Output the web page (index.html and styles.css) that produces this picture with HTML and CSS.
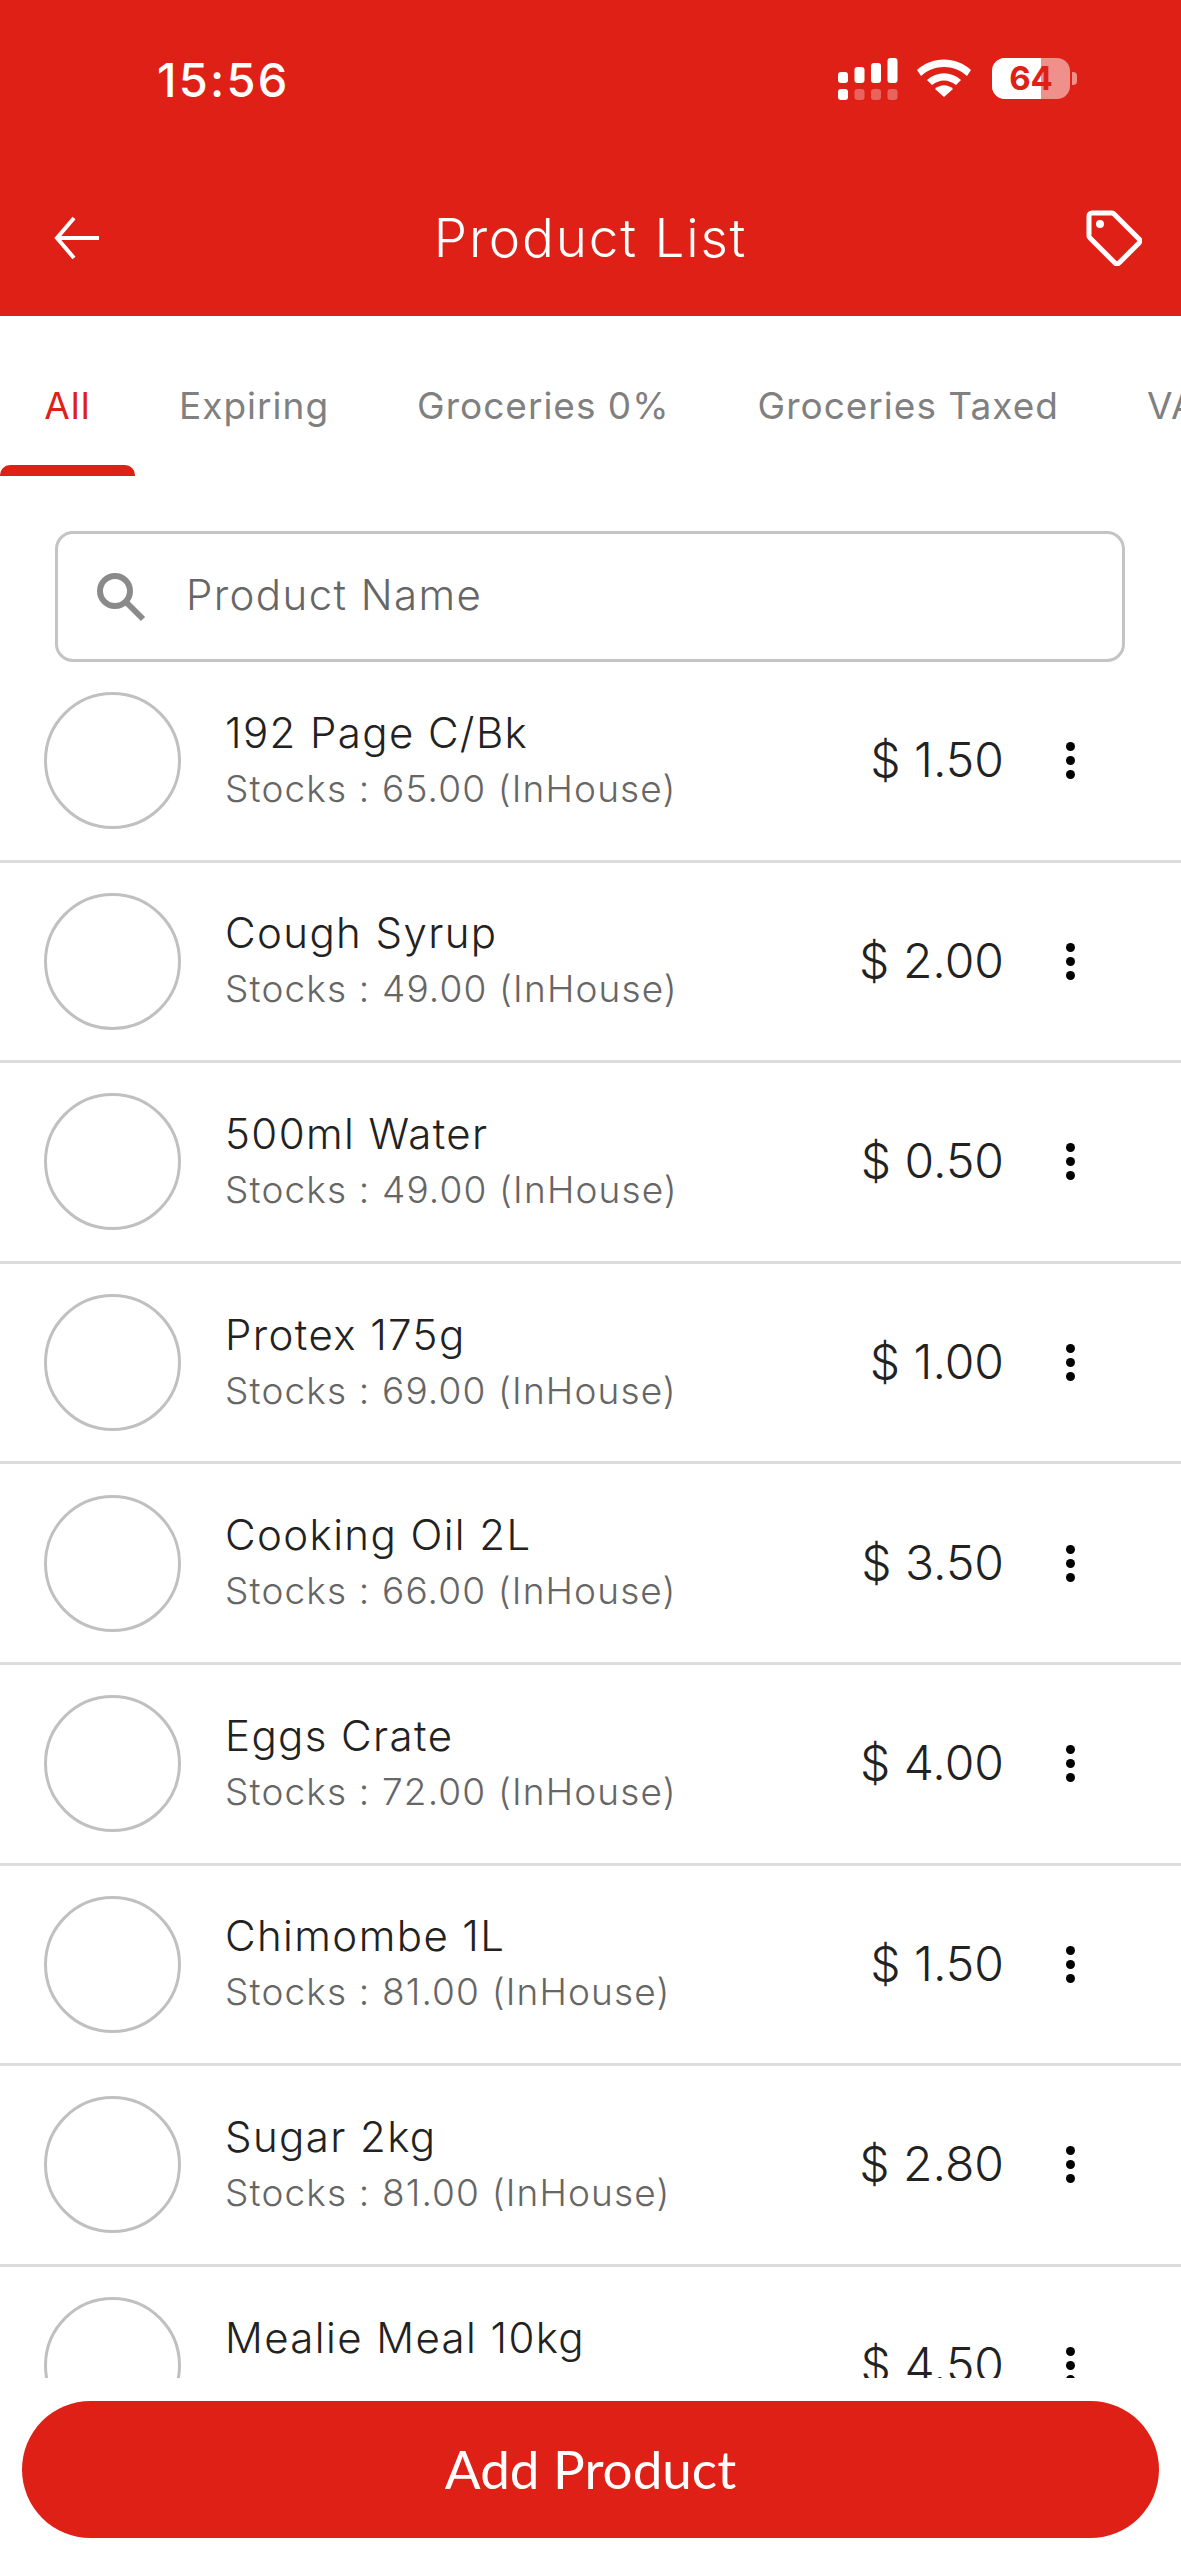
FILE: index.html
```html
<!DOCTYPE html>
<html lang="en">
<head>
    <meta charset="UTF-8">
    <meta name="viewport" content="width=device-width, initial-scale=1.0">
    <title>Product List</title>
    <link rel="stylesheet" href="styles.css">
</head>
<body>
    <div class="app">
        <div class="header">
            <div class="status-bar">
                <div class="time">15:56</div>
                <div class="status-icons">
                    <svg class="signal" width="60" height="42" viewBox="0 0 60 42" fill="#fff">
                        <rect x="0" y="14" width="10" height="11" rx="3"/>
                        <rect x="16.500" y="9" width="10" height="16" rx="3"/>
                        <rect x="33" y="5" width="10" height="20" rx="3"/>
                        <rect x="49.500" y="0" width="10" height="25" rx="3"/>
                        <rect x="0" y="31" width="10" height="11" rx="3"/>
                        <g opacity="0.3">
                            <rect x="16.500" y="31" width="10" height="11" rx="3"/>
                            <rect x="33" y="31" width="10" height="11" rx="3"/>
                            <rect x="49.500" y="31" width="10" height="11" rx="3"/>
                        </g>
                    </svg>
                    <svg class="wifi" width="54" height="38" viewBox="0 0 54 38" fill="#fff">
                        <path d="M0 11 C15 -3 39 -3 54 11 L50 17 C37 5 17 5 4 17 Z"/>
                        <path d="M10 21 C20 12 34 12 44 21 L39 26 C31 20 23 20 15 26 Z"/>
                        <path d="M18 30 C23 25 31 25 36 30 L27 38 Z"/>
                    </svg>
                    <div class="battery">
                        <div class="battery-body">
                            <div class="battery-fill"></div>
                            <span class="battery-text">64</span>
                        </div>
                        <div class="battery-cap"></div>
                    </div>
                </div>
            </div>
            <div class="toolbar">
                <svg class="back" width="46" height="44" viewBox="0 0 46 44" fill="none" stroke="#fff" stroke-width="4">
                    <path d="M45 22H4"/>
                    <path d="M20 2L3 22l17 20"/>
                </svg>
                <div class="title">Product List</div>
                <svg class="tag" width="56" height="56" viewBox="0 0 56 56" fill="none" stroke="#fff" stroke-width="5" stroke-linejoin="round">
                    <path d="M3 6a3 3 0 0 1 3-3h20a3 3 0 0 1 2 1l25 25a3 3 0 0 1 0 4L33 53a3 3 0 0 1-4 0L4 28a3 3 0 0 1-1-2z"/>
                    <circle cx="14" cy="14" r="4" fill="#fff" stroke="none"/>
                </svg>
            </div>
        </div>

        <div class="tabs">
            <div class="tab active">All</div>
            <div class="tab">Expiring</div>
            <div class="tab">Groceries 0%</div>
            <div class="tab">Groceries Taxed</div>
            <div class="tab">VAT</div>
        </div>

        <div class="search">
            <svg width="50" height="50" viewBox="0 0 50 50" fill="none" stroke="#8a8a8a" stroke-width="6">
                <circle cx="19" cy="19" r="15"/>
                <path d="M30 30l17 17"/>
            </svg>
            <span>Product Name</span>
        </div>

        <div class="list">
            <div class="row">
                <div class="thumb"></div>
                <div class="info"><div class="name">192 Page C/Bk</div><div class="stock">Stocks : 65.00 (InHouse)</div></div>
                <div class="price">$ 1.50</div>
                <div class="more"><i></i><i></i><i></i></div>
            </div>
            <div class="row">
                <div class="thumb"></div>
                <div class="info"><div class="name">Cough Syrup</div><div class="stock">Stocks : 49.00 (InHouse)</div></div>
                <div class="price">$ 2.00</div>
                <div class="more"><i></i><i></i><i></i></div>
            </div>
            <div class="row">
                <div class="thumb"></div>
                <div class="info"><div class="name">500ml Water</div><div class="stock">Stocks : 49.00 (InHouse)</div></div>
                <div class="price">$ 0.50</div>
                <div class="more"><i></i><i></i><i></i></div>
            </div>
            <div class="row">
                <div class="thumb"></div>
                <div class="info"><div class="name">Protex 175g</div><div class="stock">Stocks : 69.00 (InHouse)</div></div>
                <div class="price">$ 1.00</div>
                <div class="more"><i></i><i></i><i></i></div>
            </div>
            <div class="row">
                <div class="thumb"></div>
                <div class="info"><div class="name">Cooking Oil 2L</div><div class="stock">Stocks : 66.00 (InHouse)</div></div>
                <div class="price">$ 3.50</div>
                <div class="more"><i></i><i></i><i></i></div>
            </div>
            <div class="row">
                <div class="thumb"></div>
                <div class="info"><div class="name">Eggs Crate</div><div class="stock">Stocks : 72.00 (InHouse)</div></div>
                <div class="price">$ 4.00</div>
                <div class="more"><i></i><i></i><i></i></div>
            </div>
            <div class="row">
                <div class="thumb"></div>
                <div class="info"><div class="name">Chimombe 1L</div><div class="stock">Stocks : 81.00 (InHouse)</div></div>
                <div class="price">$ 1.50</div>
                <div class="more"><i></i><i></i><i></i></div>
            </div>
            <div class="row">
                <div class="thumb"></div>
                <div class="info"><div class="name">Sugar 2kg</div><div class="stock">Stocks : 81.00 (InHouse)</div></div>
                <div class="price">$ 2.80</div>
                <div class="more"><i></i><i></i><i></i></div>
            </div>
            <div class="row">
                <div class="thumb"></div>
                <div class="info"><div class="name">Mealie Meal 10kg</div><div class="stock">&nbsp;</div></div>
                <div class="price">$ 4.50</div>
                <div class="more"><i></i><i></i><i></i></div>
            </div>
        </div>

        <div class="footer">
            <div class="add-btn">Add Product</div>
        </div>
    </div>
</body>
</html>
```

FILE: styles.css
```css
* {
    box-sizing: border-box;
}
body {
    margin: 0;
    background: white;
    font-family: Inter, sans-serif;
}
.app {
    height: 2560px;
    display: flex;
    flex-direction: column;
    overflow: hidden;
}
.header {
    height: 316px;
    flex: none;
    background: #df2016;
    color: white;
}
.status-bar {
    height: 160px;
    display: flex;
    justify-content: space-between;
    padding: 58px 104px 0 157px;
}
.time {
    font-size: 47px;
    font-weight: 500;
    line-height: 44px;
    letter-spacing: 2.200px;
}
.status-icons {
    display: flex;
    gap: 19px;
    align-items: flex-start;
}
.wifi {
    margin-top: 1px;
}
.battery {
    display: flex;
    align-items: center;
    gap: 2px;
    margin-left: 2px;
}
.battery-body {
    width: 78px;
    height: 41px;
    border-radius: 13px;
    background: rgba(255,255,255,0.5);
    overflow: hidden;
    position: relative;
    text-align: center;
}
.battery-fill {
    position: absolute;
    left: 0;
    top: 0;
    bottom: 0;
    width: 49px;
    background: white;
}
.battery-text {
    position: relative;
    font-size: 33px;
    font-weight: 700;
    line-height: 41px;
    color: #df2016;
}
.battery-cap {
    width: 5px;
    height: 13px;
    border-radius: 0 4px 4px 0;
    background: rgba(255,255,255,0.5);
}
.toolbar {
    height: 156px;
    display: grid;
    grid-template-columns: 1fr auto 1fr;
    align-items: center;
    padding: 0 39px;
}
.back {
    margin-left: 15px;
}
.tag {
    justify-self: end;
}
.title {
    font-size: 53px;
    font-weight: 350;
    line-height: 60px;
    letter-spacing: 1.800px;
}
.tabs {
    height: 160px;
    flex: none;
    display: flex;
    overflow: hidden;
    font-size: 37px;
    letter-spacing: 1px;
    color: #808080;
}
.tab {
    flex: none;
    padding: 67px 44px 0;
    height: 160px;
}
.tab.active {
    width: 135px;
    padding: 67px 0 0;
    text-align: center;
    color: #df2016;
    position: relative;
}
.tab.active::after {
    content: "";
    position: absolute;
    left: 0;
    right: 0;
    bottom: 0;
    height: 11px;
    border-radius: 10px 10px 0 0;
    background: #df2016;
}
.search {
    flex: none;
    height: 131px;
    margin: 55px 56px 0 55px;
    border: 3px solid #c4c4c4;
    border-radius: 18px;
    display: flex;
    align-items: center;
    gap: 40px;
    padding: 0 0 4px 38px;
    font-size: 42px;
    font-weight: 300;
    letter-spacing: 1.400px;
    color: #666;
}
.search svg {
    margin-top: 4px;
}
.list {
    flex: 1;
    overflow: hidden;
}
.row {
    height: 200.600px;
    display: flex;
    align-items: center;
    padding: 0 106px 0 44px;
    border-bottom: 3px solid #dcdcdc;
}
.thumb {
    width: 137px;
    height: 137px;
    flex: none;
    border: 3px solid #c0c0c0;
    border-radius: 50%;
}
.info {
    flex: 1;
    margin-left: 44px;
    padding-top: 2px;
}
.name {
    font-size: 42px;
    font-weight: 350;
    line-height: 54px;
    letter-spacing: 1.400px;
    color: #222;
}
.stock {
    font-size: 37px;
    font-weight: 300;
    line-height: 58px;
    letter-spacing: 1.150px;
    color: #666;
}
.price {
    font-size: 48px;
    font-weight: 350;
    padding-bottom: 2px;
    color: #222;
}
.more {
    width: 9px;
    margin-left: 62px;
    display: flex;
    flex-direction: column;
    gap: 5px;
}
.more i {
    width: 9px;
    height: 9px;
    border-radius: 50%;
    background: black;
}
.footer {
    height: 182px;
    flex: none;
    background: white;
    padding: 23px 22px 0;
}
.add-btn {
    height: 137px;
    border-radius: 69px;
    background: #df2016;
    color: white;
    text-align: center;
    font-family: Lato, sans-serif;
    font-size: 53px;
    line-height: 135px;
}
```
